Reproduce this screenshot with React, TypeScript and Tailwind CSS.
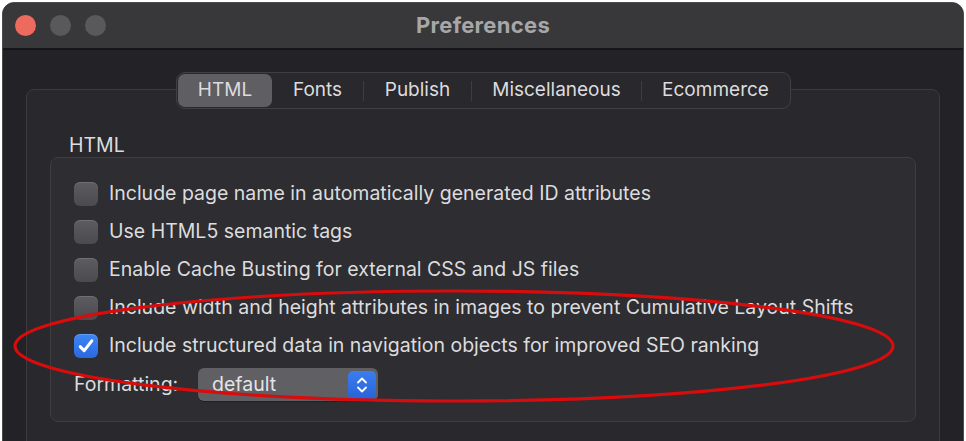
import React from "react";

const rows = [
  { label: "Include page name in automatically generated ID attributes", checked: false },
  { label: "Use HTML5 semantic tags", checked: false },
  { label: "Enable Cache Busting for external CSS and JS files", checked: false },
  { label: "Include width and height attributes in images to prevent Cumulative Layout Shifts", checked: false },
  { label: "Include structured data in navigation objects for improved SEO ranking", checked: true },
];

const tabs = [
  { label: "HTML", w: "w-[94px]", active: true },
  { label: "Fonts", w: "w-[91px]", active: false },
  { label: "Publish", w: "w-[107px]", active: false },
  { label: "Miscellaneous", w: "w-[169px]", active: false },
  { label: "Ecommerce", w: "w-[147px]", active: false },
];

function Checkbox({ checked }: { checked: boolean }) {
  if (checked) {
    return (
      <div className="w-[24px] h-[24px] rounded-[6px] bg-gradient-to-b from-[#3d86f7] to-[#2a68e0] flex items-center justify-center shrink-0 shadow-[inset_0_1px_0_rgba(255,255,255,0.2)]">
        <svg width="18" height="18" viewBox="0 0 18 18">
          <path d="M3.2 9.6 L7.2 13.6 L14.8 3.8" fill="none" stroke="white" strokeWidth="3" strokeLinecap="round" strokeLinejoin="round" />
        </svg>
      </div>
    );
  }
  return (
    <div className="w-[24px] h-[24px] rounded-[6px] bg-gradient-to-b from-[#5d5c61] to-[#4b4a4f] shrink-0 shadow-[inset_0_1px_0_rgba(255,255,255,0.12)]" />
  );
}

export default function App() {
  return (
    <div
      className="relative w-[966px] h-[441px] overflow-hidden bg-white pt-[2px] px-[2px]"
      style={{ fontFamily: "Inter, 'Liberation Sans', sans-serif" }}
    >
      <div className="h-[470px] rounded-t-[12px] border border-[#4c4c4e] bg-[#232226] overflow-hidden flex flex-col">
        {/* Title bar */}
        <div className="h-[47px] shrink-0 bg-[#38383a] border-b-2 border-[#161618] grid grid-cols-[1fr_auto_1fr] items-center pl-[12px] pr-[12px]">
          <div className="flex items-center gap-[14px]">
            <div className="w-[21px] h-[21px] rounded-full bg-[#ec6a5e]" />
            <div className="w-[21px] h-[21px] rounded-full bg-[#59595b]" />
            <div className="w-[21px] h-[21px] rounded-full bg-[#59595b]" />
          </div>
          <div className="text-[22px] font-bold text-[#a7a7a9] tracking-[0.3px] -mt-[1px]">Preferences</div>
          <div />
        </div>

        {/* Body */}
        <div className="flex-1 flex flex-col pt-[22px] px-[23px]">
          <div className="relative z-10 flex justify-center pl-[1px]">
            <div className="h-[37px] rounded-[9px] border border-[#404043] bg-[#29282c] flex items-center px-[1px]">
              {tabs.map((t, i) => (
                <div key={t.label} className="flex items-center">
                  {i > 0 && !tabs[i - 1].active && (
                    <div className="w-[1px] h-[20px] bg-[#3e3d41]" />
                  )}
                  <div
                    className={
                      t.w +
                      " h-[33px] flex items-center justify-center text-[19px] text-[#dcdcde] " +
                      (t.active ? "rounded-[7px] bg-[#5f5e63]" : "")
                    }
                  >
                    {t.label}
                  </div>
                </div>
              ))}
            </div>
          </div>

          <div className="-mt-[20px] flex-1 rounded-[8px] border border-[#3c3b3f] bg-[#29282c] pt-[44px] px-[23px]">
            <div className="h-[22px] leading-[22px] pl-[19px] text-[19.5px] text-[#dcdcde]">HTML</div>
            <div className="mt-[1px] h-[265px] rounded-[8px] border border-[#3e3d41] bg-[#2e2d32] pt-[17px] px-[23px]">
              {rows.map((r) => (
                <div key={r.label} className="h-[38px] flex items-center">
                  <Checkbox checked={r.checked} />
                  <span className="ml-[11px] text-[19.5px] text-[#dcdcde] whitespace-nowrap">{r.label}</span>
                </div>
              ))}
              <div className="mt-[3px] flex items-center h-[33px]">
                <span className="w-[124px] text-[19.5px] text-[#dcdcde]">Formatting:</span>
                <div className="w-[180px] h-[33px] rounded-[6px] bg-[#605f64] flex items-center justify-between pl-[14px] pr-[2px] shadow-[0_1px_1px_rgba(0,0,0,0.3)]">
                  <span className="text-[19.5px] text-[#e4e4e6]">default</span>
                  <div className="w-[28px] h-[28px] rounded-[5px] bg-gradient-to-b from-[#3a7ef0] to-[#2a63d6] flex items-center justify-center">
                    <svg width="14" height="20" viewBox="0 0 14 20">
                      <path d="M3 7.5 L7 3.5 L11 7.5" fill="none" stroke="white" strokeWidth="1.8" strokeLinecap="round" strokeLinejoin="round" />
                      <path d="M3 12.5 L7 16.5 L11 12.5" fill="none" stroke="white" strokeWidth="1.8" strokeLinecap="round" strokeLinejoin="round" />
                    </svg>
                  </div>
                </div>
              </div>
            </div>
          </div>
        </div>
      </div>

      {/* red annotation ellipse */}
      <svg className="absolute inset-0 pointer-events-none" width="966" height="441" viewBox="0 0 966 441">
        <ellipse cx="454" cy="346" rx="439" ry="55" fill="none" stroke="#d80c0c" strokeWidth="3.2" />
      </svg>
    </div>
  );
}
